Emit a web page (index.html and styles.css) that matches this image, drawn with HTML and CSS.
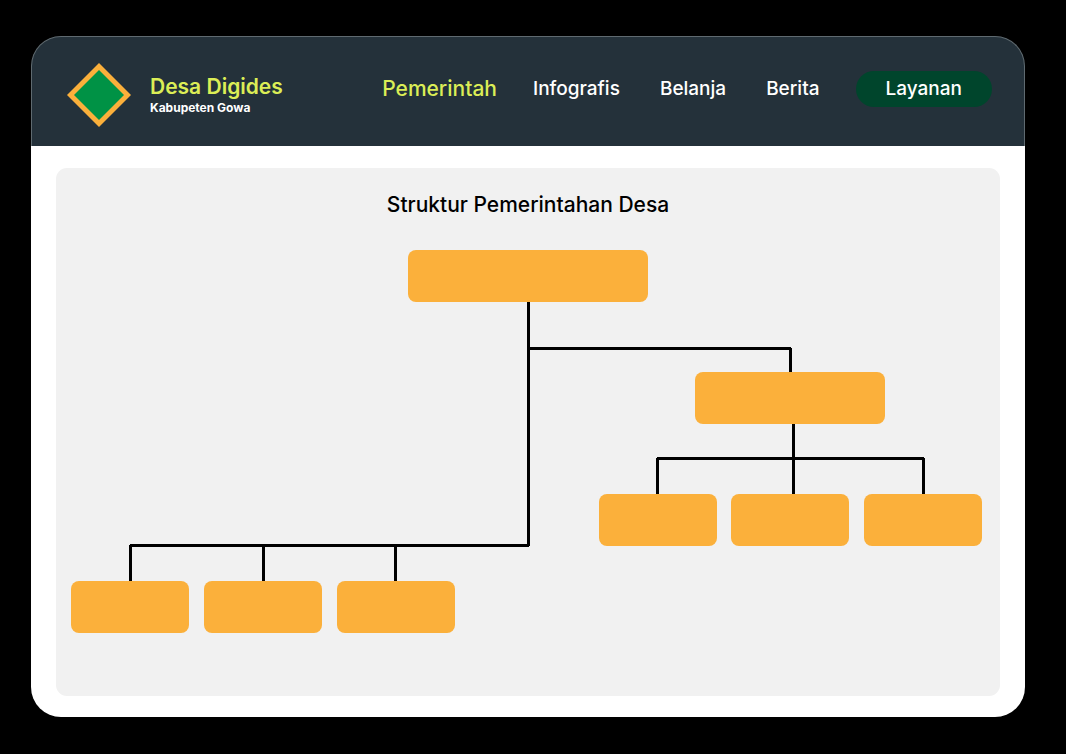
FILE: index.html
```html
<!DOCTYPE html>
<html lang="id">
<head>
<meta charset="utf-8">
<meta name="viewport" content="width=device-width, initial-scale=1">
<title>Desa Digides</title>
<link rel="stylesheet" href="styles.css">
</head>
<body class="page">
<div class="card">
  <header class="header">
    <div class="brand">
      <svg class="brand-logo" viewBox="0 0 64 64" aria-hidden="true">
        <path fill="#fbb03b" d="M32 0 64 32 32 64 0 32Z"/>
        <path fill="#009245" d="M32 7 57 32 32 57 7 32Z"/>
      </svg>
      <div class="brand-text">
        <span class="brand-name">Desa Digides</span>
        <span class="brand-region">Kabupeten Gowa</span>
      </div>
    </div>
    <nav class="nav">
      <a class="nav-link nav-link-active" href="#pemerintah">Pemerintah</a>
      <a class="nav-link" href="#infografis">Infografis</a>
      <a class="nav-link" href="#belanja">Belanja</a>
      <a class="nav-link" href="#berita">Berita</a>
      <button class="nav-button" type="button">Layanan</button>
    </nav>
  </header>
  <main class="main">
    <section class="panel">
      <h1 class="panel-title">Struktur Pemerintahan Desa</h1>
      <svg class="chart" viewBox="0 0 944 478" role="img" aria-label="Struktur Pemerintahan Desa">
        <g class="chart-lines">
          <rect x="471" y="80" width="3" height="248"/>
          <rect x="471" y="129" width="264" height="3"/>
          <rect x="733" y="130" width="3" height="28"/>
          <rect x="736" y="202" width="3" height="78"/>
          <rect x="601" y="239" width="267" height="3"/>
          <rect x="600" y="240" width="3" height="40"/>
          <rect x="866" y="240" width="3" height="40"/>
          <rect x="74" y="326" width="399" height="3"/>
          <rect x="73" y="327" width="3" height="40"/>
          <rect x="206" y="327" width="3" height="40"/>
          <rect x="338" y="327" width="3" height="40"/>
        </g>
        <g class="chart-nodes">
          <rect x="352" y="32" width="240" height="52" rx="8"/>
          <rect x="639" y="154" width="190" height="52" rx="8"/>
          <rect x="543" y="276" width="118" height="52" rx="8"/>
          <rect x="675" y="276" width="118" height="52" rx="8"/>
          <rect x="808" y="276" width="118" height="52" rx="8"/>
          <rect x="15" y="363" width="118" height="52" rx="8"/>
          <rect x="148" y="363" width="118" height="52" rx="8"/>
          <rect x="281" y="363" width="118" height="52" rx="8"/>
        </g>
      </svg>
    </section>
  </main>
</div>
</body>
</html>
```
FILE: styles.css
```css
* {
  box-sizing: border-box;
}

.page {
  margin: 0;
  padding: 36px 41px 36px 31px;
  background: #000;
  font-family: Inter, "Open Sans", sans-serif;
  font-weight: 500;
}

.header {
  display: flex;
  align-items: flex-start;
  justify-content: space-between;
  gap: 32px;
  padding: 26px 32px 19px 35px;
  border: 1px solid #5f6a70;
  border-bottom: 0;
  border-radius: 30px 30px 0 0;
  background: #24313a;
}

.brand {
  display: flex;
  gap: 19px;
}

.brand-logo {
  width: 64px;
  height: 64px;
}

.brand-text {
  display: flex;
  flex-direction: column;
  padding-top: 11px;
}

.brand-name {
  color: #dcee56;
  font-size: 21px;
  font-weight: 600;
  line-height: 26px;
}

.brand-region {
  color: #fff;
  font-size: 12px;
  font-weight: 700;
  line-height: 16px;
}

.nav {
  display: flex;
  align-items: center;
  gap: 32px;
  padding-top: 8px;
}

.nav-link {
  padding: 0 4px;
  color: #fff;
  font-size: 19px;
  line-height: 36px;
  text-decoration: none;
}

.nav-link-active {
  padding: 0;
  color: #dcee56;
  font-size: 21px;
}

.nav-button {
  padding: 0 30px;
  border: 0;
  border-radius: 18px;
  background: #00452c;
  color: #fff;
  font: inherit;
  font-size: 19px;
  line-height: 36px;
}

.main {
  padding: 22px 25px 21px;
  border-radius: 0 0 30px 30px;
  background: #fff;
}

.panel {
  padding-top: 24px;
  border-radius: 11px;
  background: #f1f1f1;
}

.panel-title {
  margin: 0;
  font-size: 21px;
  font-weight: 500;
  line-height: 26px;
  text-align: center;
}

.chart {
  display: block;
  width: 100%;
  height: auto;
}

.chart-lines {
  fill: #000;
}

.chart-nodes {
  fill: #fbb03b;
}
```
